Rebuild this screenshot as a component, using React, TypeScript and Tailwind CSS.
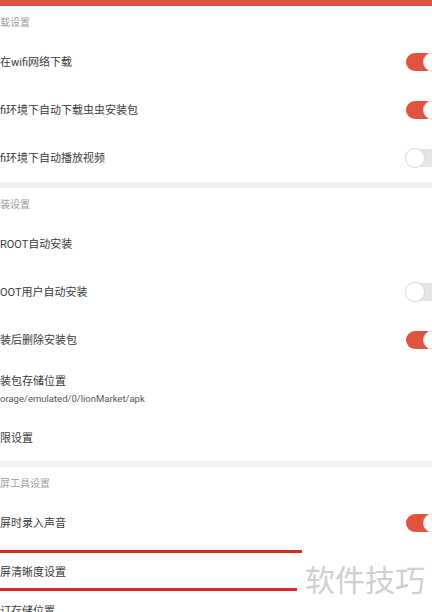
import React from "react";

type Row = { title: string; sub?: string; toggle?: boolean; h?: string };

const font = { fontFamily: "Roboto, 'Noto Sans CJK SC', sans-serif" };

function Toggle({ on }: { on: boolean }) {
  return (
    <div
      className={`relative -mr-[10px] h-[18px] w-[36px] shrink-0 rounded-full ${
        on ? "bg-[#e0533f]" : "bg-[#e4e4e4]"
      }`}
    >
      <div
        className={`absolute top-[-1px] h-[20px] w-[20px] rounded-full border bg-white ${
          on ? "right-[-1px] border-[#f3d6d1]" : "left-[-1px] border-[#d8d8d8]"
        }`}
      />
    </div>
  );
}

function Header({ text }: { text: string }) {
  return (
    <div className="flex h-[32px] items-center pt-[1px] text-[10px] text-[#9e9e9e]">{text}</div>
  );
}

function Item({ row }: { row: Row }) {
  return (
    <div className={`flex items-center justify-between ${row.h ?? "h-[48px]"}`}>
      <div className="flex flex-col pt-[2px]">
        <span className="text-[11px] leading-[16px] text-[#3a3a3a]">{row.title}</span>
        {row.sub && (
          <span className="mt-[2px] text-[9.5px] leading-[14px] text-[#555]">{row.sub}</span>
        )}
      </div>
      {row.toggle !== undefined && <Toggle on={row.toggle} />}
    </div>
  );
}

function Divider() {
  return <div className="h-[6px] bg-[#f0f0f0]" />;
}

const download: Row[] = [
  { title: "在wifi网络下载", toggle: true },
  { title: "fi环境下自动下载虫虫安装包", toggle: true },
  { title: "fi环境下自动播放视频", toggle: false },
];

const install: Row[] = [
  { title: "ROOT自动安装" },
  { title: "OOT用户自动安装", toggle: false },
  { title: "装后删除安装包", toggle: true },
  { title: "装包存储位置", sub: "orage/emulated/0/lionMarket/apk", h: "h-[50px]" },
  { title: "限设置", h: "h-[47px]" },
];

const screen: Row[] = [
  { title: "屏时录入声音", toggle: true },
  { title: "屏清晰度设置", h: "h-[50px]" },
];

export default function App() {
  return (
    <div className="relative h-[612px] w-[432px] overflow-hidden bg-white" style={font}>
      <div className="h-[6px] bg-[#e0533f]" />
      <Header text="载设置" />
      {download.map((r) => (
        <Item key={r.title} row={r} />
      ))}
      <Divider />
      <Header text="装设置" />
      {install.map((r) => (
        <Item key={r.title} row={r} />
      ))}
      <Divider />
      <Header text="屏工具设置" />
      {screen.map((r) => (
        <Item key={r.title} row={r} />
      ))}
      <div className="pt-[7px] text-[11px] leading-[16px] text-[#3a3a3a]">订存储位置</div>

      <div className="absolute left-0 top-[550px] h-[3px] w-[302px] bg-[#e2261c]" />
      <div className="absolute left-0 top-[588px] h-[3px] w-[297px] bg-[#e2261c]" />
      <div className="absolute left-[305px] top-[561px] text-[30px] leading-[40px] text-[#cfcfcf]">
        软件技巧
      </div>
    </div>
  );
}
